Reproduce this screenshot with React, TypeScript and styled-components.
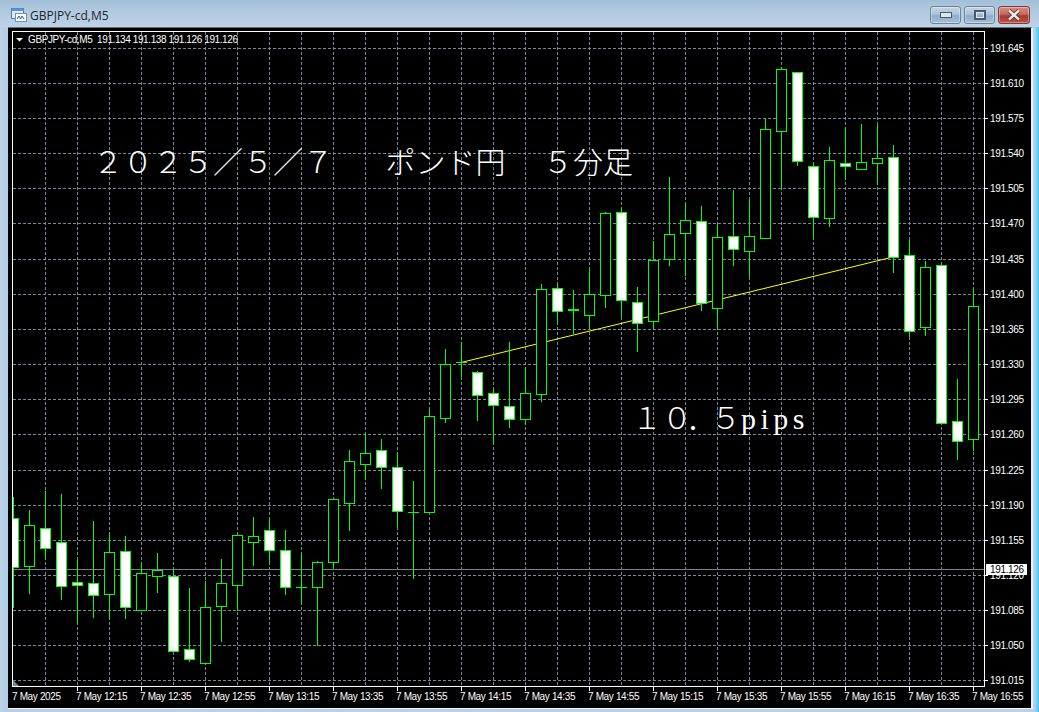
import styled, { createGlobalStyle } from "styled-components";

const GlobalStyle = createGlobalStyle`
    html, body {
        margin: 0;
        padding: 0;
        background-color: #b9d2ea;
    }
`;

const Desktop = styled.div`
    width: 1039px;
    height: 712px;
    overflow: hidden;
    display: flex;
    flex-direction: column;
    background: linear-gradient(90deg, #c4d4e2 0, #b4cfe9 3px, #b9d2ea 1033px, #a6d4ee 1035px, #3fc6f2 1039px);
`;

const TitleBar = styled.header`
    height: 27px;
    flex: none;
    display: flex;
    align-items: center;
    justify-content: space-between;
    padding: 0 9px 0 11px;
    background: linear-gradient(180deg, #a3bfd8 0, #b2cade 12px, #bdd3e7 27px);
`;

const TitleGroup = styled.div`
    display: flex;
    align-items: center;
    gap: 3px;
    margin-top: 3px;
`;

const TitleText = styled.span`
    font-family: "Open Sans", "Liberation Sans", sans-serif;
    font-size: 12px;
    color: #1c2530;
`;

const WindowButtons = styled.div`
    display: flex;
    gap: 3px;
    margin-top: 3px;
`;

const WindowButton = styled.button<{ $close?: boolean }>`
    width: ${(p) => (p.$close ? "32px" : "31px")};
    height: 18px;
    padding: 0;
    display: flex;
    align-items: center;
    justify-content: center;
    border-radius: 3px;
    border: 1px solid ${(p) => (p.$close ? "#7d3a36" : "#6f8397")};
    box-shadow: inset 0 0 0 1px rgba(255, 255, 255, 0.35);
    background: ${(p) =>
        p.$close
            ? "linear-gradient(180deg, #d58f85 0, #c8695d 45%, #a83a2e 55%, #bc5044 100%)"
            : "linear-gradient(180deg, #c3d5e6 0, #aac3da 45%, #8fadca 55%, #a3bfd9 100%)"};
`;

const Client = styled.main`
    position: relative;
    flex: 1;
    margin: 0 6px 3px 8px;
    border-top: 1px solid #6d6d6d;
    border-bottom: 1px solid #f4f6f8;
    border-right: 2px solid #eef2f6;
    background-color: #000;
    overflow: hidden;
`;

const ChartSvg = styled.svg`
    display: block;
    width: 1023px;
    height: 680px;
`;

const GridLine = styled.line`
    stroke: #778899;
    stroke-width: 1;
    stroke-dasharray: 3 2;
    shape-rendering: crispEdges;
`;

const Frame = styled.path`
    fill: none;
    stroke: #fff;
    stroke-width: 1;
    shape-rendering: crispEdges;
`;

const Tick = styled.line`
    stroke: #fff;
    stroke-width: 1;
    shape-rendering: crispEdges;
`;

const Wick = styled.line`
    stroke: #00ff00;
    stroke-width: 1;
    shape-rendering: crispEdges;
`;

const Body = styled.rect<{ $bear: boolean }>`
    fill: ${(p) => (p.$bear ? "#fff" : "#000")};
    stroke: #00ff00;
    stroke-width: 1;
    shape-rendering: crispEdges;
`;

const PriceLine = styled.line`
    stroke: #778088;
    stroke-width: 1;
    shape-rendering: crispEdges;
`;

const TrendLine = styled.line`
    stroke: #ffff00;
    stroke-width: 1;
`;

const AxisText = styled.text`
    font-family: "Liberation Sans", sans-serif;
    font-size: 10px;
    letter-spacing: -0.35px;
    fill: #fff;
`;

const HeaderText = styled(AxisText)`
    letter-spacing: -0.4px;
`;

const TagBox = styled.rect`
    fill: #fff;
`;

const TagText = styled(AxisText)`
    fill: #000;
`;

const Annotation = styled.div<{ $x: number; $y: number }>`
    position: absolute;
    left: ${(p) => p.$x}px;
    top: ${(p) => p.$y}px;
    font-family: "Liberation Serif", "Noto Sans CJK JP", serif;
    font-size: 30px;
    font-weight: 300;
    line-height: 36px;
    white-space: pre;
    color: #fff;
`;

const Tight = styled.span`
    letter-spacing: -5.5px;
`;

const Pips = styled.span`
    font-size: 30px;
    letter-spacing: 4.5px;
`;

// body top, body bottom, wick top, wick bottom, white body or not; x comes from the index
type Candle = [number, number, number, number, boolean];

const candles: Candle[] = [
    [518, 567, 497, 607, true],
    [525, 566, 510, 593, false],
    [528, 548, 491, 558, true],
    [542, 586, 494, 599, true],
    [582, 585, 559, 622, true],
    [583, 595, 521, 617, true],
    [552, 594, 534, 618, false],
    [551, 607, 536, 618, true],
    [573, 610, 563, 610, false],
    [570, 576, 553, 592, false],
    [576, 651, 569, 651, true],
    [649, 659, 588, 661, true],
    [607, 663, 581, 663, false],
    [583, 606, 559, 641, false],
    [535, 585, 535, 610, false],
    [536, 542, 517, 565, false],
    [530, 550, 518, 562, true],
    [550, 587, 530, 594, true],
    [587, 587, 553, 603, false],
    [562, 587, 561, 645, false],
    [499, 562, 499, 568, false],
    [461, 503, 450, 530, false],
    [453, 464, 434, 479, false],
    [450, 467, 439, 488, true],
    [467, 511, 453, 526, true],
    [512, 512, 481, 578, false],
    [416, 512, 409, 512, false],
    [364, 418, 349, 422, false],
    [362, 362, 342, 376, false],
    [372, 395, 371, 420, true],
    [393, 405, 389, 443, true],
    [406, 419, 342, 427, true],
    [393, 419, 367, 424, false],
    [289, 394, 284, 401, false],
    [288, 311, 284, 322, true],
    [309, 310, 290, 333, false],
    [294, 315, 269, 328, false],
    [213, 295, 212, 307, false],
    [212, 300, 207, 316, true],
    [302, 323, 287, 351, true],
    [260, 321, 241, 329, false],
    [234, 259, 177, 265, false],
    [220, 233, 204, 275, false],
    [221, 303, 206, 310, true],
    [237, 308, 224, 329, false],
    [236, 249, 190, 265, true],
    [236, 251, 199, 276, false],
    [129, 238, 118, 238, false],
    [69, 131, 67, 188, false],
    [72, 161, 72, 165, true],
    [166, 217, 162, 238, true],
    [160, 218, 147, 226, false],
    [163, 166, 127, 179, true],
    [162, 169, 124, 169, false],
    [158, 163, 125, 184, false],
    [157, 257, 145, 272, true],
    [255, 331, 240, 336, true],
    [267, 327, 261, 335, false],
    [265, 423, 265, 423, true],
    [421, 441, 379, 459, true],
    [306, 439, 289, 450, false],
];

const priceRows: [number, string][] = [
    [48, "191.645"], [83, "191.610"], [118, "191.575"], [153, "191.540"], [188, "191.505"],
    [223, "191.470"], [259, "191.435"], [294, "191.400"], [329, "191.365"], [364, "191.330"],
    [399, "191.295"], [434, "191.260"], [470, "191.225"], [505, "191.190"], [540, "191.155"],
    [575, "191.120"], [610, "191.085"], [645, "191.050"], [680, "191.015"],
];

const timeLabels = [
    "7 May 2025", "7 May 12:15", "7 May 12:35", "7 May 12:55", "7 May 13:15", "7 May 13:35",
    "7 May 13:55", "7 May 14:15", "7 May 14:35", "7 May 14:55", "7 May 15:15", "7 May 15:35",
    "7 May 15:55", "7 May 16:15", "7 May 16:35", "7 May 16:55",
];

const gridColumns = Array.from({ length: 30 }, (_, i) => 45 + 32 * i);

function AppIcon() {
    return (
        <svg width="16" height="16" viewBox="0 0 16 16">
            <rect x="0.5" y="1.5" width="12" height="10" fill="#dfeafa" stroke="#4f7fc0" />
            <rect x="0.5" y="1.5" width="12" height="2.5" fill="#5f93d8" />
            <rect x="4.5" y="6.5" width="11" height="8" fill="#fff" stroke="#6d8fc4" />
            <path d="M6 12 L8 9 L9.5 12 L11 9 L13 12" fill="none" stroke="#2a60b0" />
        </svg>
    );
}

function Chart() {
    return (
        <ChartSvg viewBox="8 28 1023 680">
            <defs>
                <clipPath id="plot">
                    <rect x="13" y="32" width="971" height="654" />
                </clipPath>
            </defs>
            {priceRows.map(([y]) => (
                <GridLine key={y} x1={13} x2={984} y1={y + 0.5} y2={y + 0.5} />
            ))}
            {gridColumns.map((x) => (
                <GridLine key={x} x1={x + 0.5} x2={x + 0.5} y1={32} y2={686} />
            ))}
            <PriceLine x1={13} x2={984} y1={569.5} y2={569.5} />
            <TrendLine x1={461} y1={362.5} x2={893} y2={257} />
            <g clipPath="url(#plot)">
                {candles.map(([top, bottom, high, low, white], i) => {
                    const x = 13 + 16 * i;
                    return (
                        <g key={x}>
                            <Wick x1={x + 0.5} x2={x + 0.5} y1={high} y2={low + 1} />
                            {top === bottom ? (
                                <Wick x1={x - 5} x2={x + 6} y1={top + 0.5} y2={top + 0.5} />
                            ) : (
                                <Body $bear={white} x={x - 4.5} y={top + 0.5} width={10} height={bottom - top} />
                            )}
                        </g>
                    );
                })}
            </g>
            <Frame d="M12.5 31.5 H984.5 V686.5 H12.5 Z" />
            <path d="M13 686 V680 L19 686 Z" fill="#778899" />
            {priceRows.map(([y, label]) => (
                <g key={label}>
                    <Tick x1={984} x2={988} y1={y + 0.5} y2={y + 0.5} />
                    <AxisText x={990} y={y + 4}>{label}</AxisText>
                </g>
            ))}
            {timeLabels.map((label, i) => (
                <g key={label}>
                    {i > 0 && <Tick x1={13 + 64 * i + 0.5} x2={13 + 64 * i + 0.5} y1={687} y2={691} />}
                    <AxisText x={12 + 64 * i} y={700}>{label}</AxisText>
                </g>
            ))}
            <TagBox x={986} y={564} width={41} height={11} />
            <TagText x={990} y={573}>191.126</TagText>
            <path d="M16 38 H23 L19.5 41.5 Z" fill="#fff" />
            <HeaderText x={28} y={43} xmlSpace="preserve">GBPJPY-cd,M5  191.134 191.138 191.126 191.126</HeaderText>
        </ChartSvg>
    );
}

export default function App() {
    return (
        <Desktop>
            <GlobalStyle />
            <TitleBar>
                <TitleGroup>
                    <AppIcon />
                    <TitleText>GBPJPY-cd,M5</TitleText>
                </TitleGroup>
                <WindowButtons>
                    <WindowButton aria-label="minimize">
                        <svg width="12" height="6" viewBox="0 0 12 6">
                            <rect x="0.5" y="0.5" width="11" height="5" fill="#dfe7ee" stroke="#4a5a6a" />
                        </svg>
                    </WindowButton>
                    <WindowButton aria-label="maximize">
                        <svg width="12" height="10" viewBox="0 0 12 10">
                            <rect x="1" y="1" width="10" height="8" fill="none" stroke="#4a5a6a" strokeWidth="2" />
                            <rect x="2.5" y="2.5" width="7" height="5" fill="none" stroke="#dfe7ee" />
                        </svg>
                    </WindowButton>
                    <WindowButton $close aria-label="close">
                        <svg width="14" height="12" viewBox="0 0 14 12">
                            <path d="M2 1.5 L12 10.5 M12 1.5 L2 10.5" stroke="#5a2a28" strokeWidth="4" />
                            <path d="M2 1.5 L12 10.5 M12 1.5 L2 10.5" stroke="#eeeeee" strokeWidth="2.4" />
                        </svg>
                    </WindowButton>
                </WindowButtons>
            </TitleBar>
            <Client>
                <Chart />
                <Annotation $x={85} $y={117}>{"２０２５／５／７　   ポンド円　 ５分足"}</Annotation>
                <Annotation $x={624} $y={373}>１<Tight>０．</Tight>５<Pips>pips</Pips></Annotation>
            </Client>
        </Desktop>
    );
}
